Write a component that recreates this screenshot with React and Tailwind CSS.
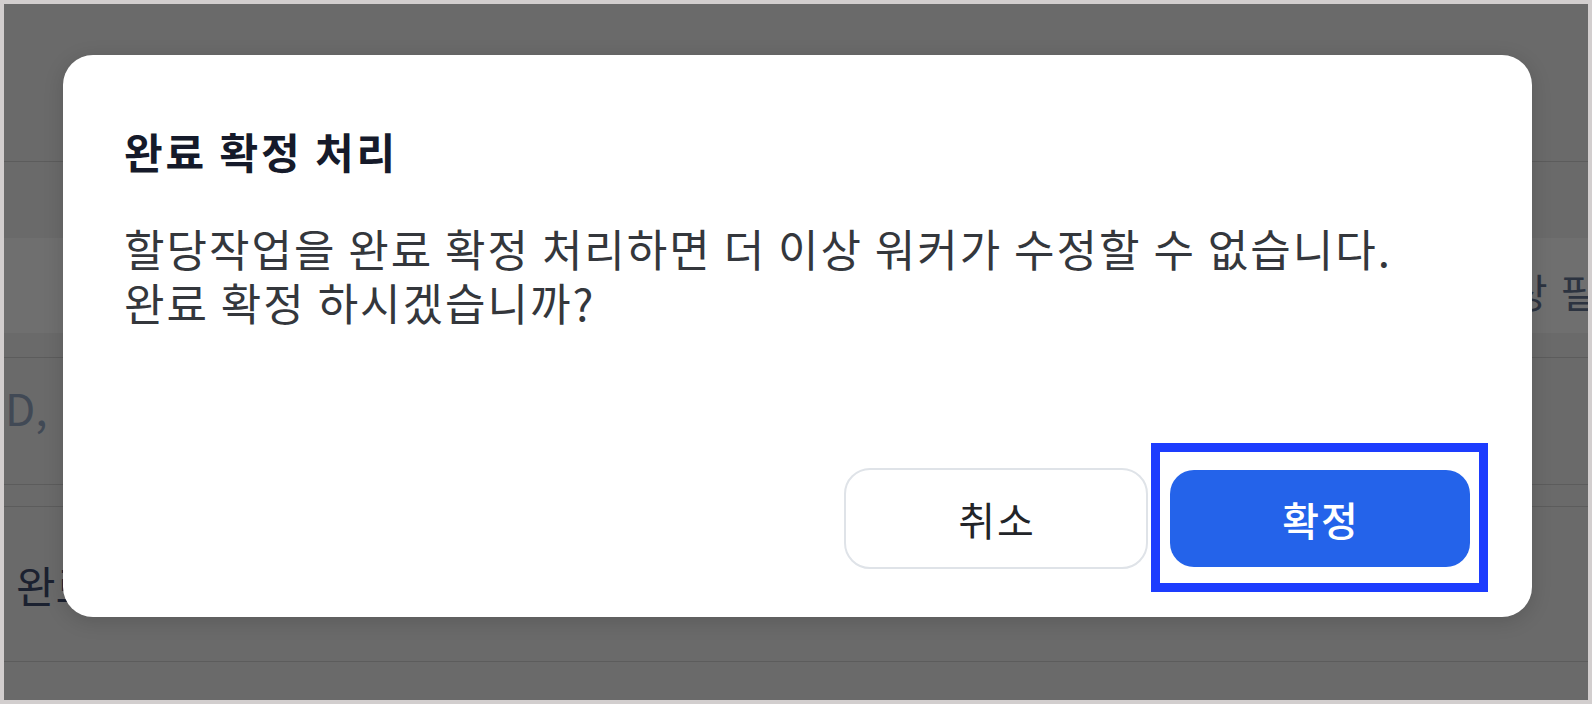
import React from 'react';

const font = "font-['Noto_Sans_CJK_KR','Noto_Sans',sans-serif]";

const Backdrop = () => (
  <div className="flex h-full w-full flex-col overflow-hidden bg-[#6a6a6a]">
    <div className="h-[158px] shrink-0 border-b border-[#5c5c5c]" />
    <div className="flex h-[196px] shrink-0 flex-col border-b border-[#5c5c5c]">
      <div className="h-[76px] shrink-0" />
      <div className="flex h-[95px] shrink-0 items-center bg-[#6f6f6f] pt-[10px]">
        <span className="ml-[1468px] whitespace-nowrap text-[40px] tracking-[2px] text-[#2c3340]">대상 필드</span>
      </div>
    </div>
    <div className="flex h-[127px] shrink-0 items-start border-b border-[#5c5c5c] pt-[16px]">
      <span className="ml-[-12px] whitespace-nowrap text-[44px] text-[#414955]">ID,</span>
    </div>
    <div className="h-[22px] shrink-0 border-b border-[#5c5c5c]" />
    <div className="flex h-[155px] shrink-0 items-center border-b border-[#5c5c5c]">
      <span className="ml-[12px] whitespace-nowrap text-[43px] text-[#1b2130]">완료 확정</span>
    </div>
    <div className="flex-1" />
  </div>
);

export default function App() {
  return (
    <div className={`relative h-[704px] w-[1592px] border-4 border-[#d2cece] ${font}`}>
      <Backdrop />

      <div className="absolute left-[59px] top-[51px] flex w-[1469px] flex-col rounded-[30px] bg-white pb-[48px] pl-[61px] pr-[62px] pt-[68px] shadow-[0_4px_20px_rgba(0,0,0,0.15)]">
        <h2 className="text-[42px] font-bold leading-[56px] tracking-[2.9px] text-[#151a2a]">완료 확정 처리</h2>
        <div className="mt-[42px] text-[44px] leading-[54px] tracking-[2px] text-[#34373c]">
          <p>할당작업을 완료 확정 처리하면 더 이상 워커가 수정할 수 없습니다.</p>
          <p>완료 확정 하시겠습니까?</p>
        </div>

        <div className="mt-[139px] flex items-center justify-end gap-[22px]">
          <button className="flex h-[101px] w-[304px] items-center justify-center rounded-[26px] border-2 border-[#dfe3e8] bg-white pl-[2px] text-[40px] font-normal tracking-[2px] text-[#222428]">
            취소
          </button>
          <div className="relative">
            <button className="flex h-[97px] w-[300px] items-center justify-center rounded-[24px] bg-[#2463ea] pl-[2px] text-[40px] font-medium tracking-[2px] text-white">
              확정
            </button>
            <span className="pointer-events-none absolute bottom-[-25px] left-[-19px] right-[-18px] top-[-27px] border-[9px] border-[#1d3cfe]" />
          </div>
        </div>
      </div>
    </div>
  );
}
